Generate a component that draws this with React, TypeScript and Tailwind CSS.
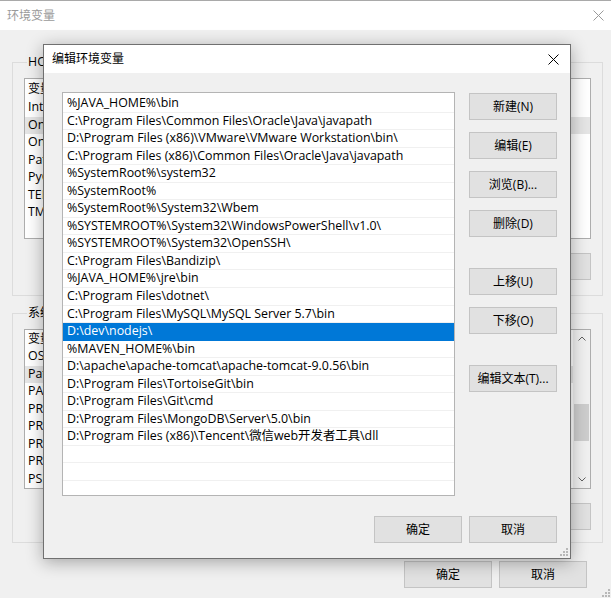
import React from "react";

const paths = [
  "%JAVA_HOME%\\bin",
  "C:\\Program Files\\Common Files\\Oracle\\Java\\javapath",
  "D:\\Program Files (x86)\\VMware\\VMware Workstation\\bin\\",
  "C:\\Program Files (x86)\\Common Files\\Oracle\\Java\\javapath",
  "%SystemRoot%\\system32",
  "%SystemRoot%",
  "%SystemRoot%\\System32\\Wbem",
  "%SYSTEMROOT%\\System32\\WindowsPowerShell\\v1.0\\",
  "%SYSTEMROOT%\\System32\\OpenSSH\\",
  "C:\\Program Files\\Bandizip\\",
  "%JAVA_HOME%\\jre\\bin",
  "C:\\Program Files\\dotnet\\",
  "C:\\Program Files\\MySQL\\MySQL Server 5.7\\bin",
  "D:\\dev\\nodejs\\",
  "%MAVEN_HOME%\\bin",
  "D:\\apache\\apache-tomcat\\apache-tomcat-9.0.56\\bin",
  "D:\\Program Files\\TortoiseGit\\bin",
  "D:\\Program Files\\Git\\cmd",
  "D:\\Program Files\\MongoDB\\Server\\5.0\\bin",
  "D:\\Program Files (x86)\\Tencent\\微信web开发者工具\\dll",
  "",
  "",
  "",
];

const userVars = ["IntelliJ IDEA", "OneDrive", "OneDriveConsumer", "Path", "PyCharm", "TEMP", "TMP"];
const sysVars = [
  "OS",
  "Path",
  "PATHEXT",
  "PROCESSOR_ARCHITECTURE",
  "PROCESSOR_IDENTIFIER",
  "PROCESSOR_LEVEL",
  "PROCESSOR_REVISION",
  "PSModulePath",
];

function Btn({ children, className = "" }: { children?: React.ReactNode; className?: string }) {
  return (
    <div
      className={
        "flex items-center justify-center h-[27px] w-[88px] bg-[#e1e1e1] border border-[#c4c4c4] text-[12px] text-black shrink-0 " +
        className
      }
    >
      {children}
    </div>
  );
}

function CloseX({ color }: { color: string }) {
  return (
    <svg width="11" height="11" viewBox="0 0 11 11">
      <path d="M0.5 0.5 L10.5 10.5 M10.5 0.5 L0.5 10.5" stroke={color} strokeWidth="1" fill="none" />
    </svg>
  );
}

function Grip() {
  return (
    <svg width="8" height="8" viewBox="0 0 8 8">
      <rect x="6" y="0" width="2" height="2" fill="#b8b8b8" />
      <rect x="3" y="3" width="2" height="2" fill="#b8b8b8" />
      <rect x="6" y="3" width="2" height="2" fill="#b8b8b8" />
      <rect x="0" y="6" width="2" height="2" fill="#b8b8b8" />
      <rect x="3" y="6" width="2" height="2" fill="#b8b8b8" />
      <rect x="6" y="6" width="2" height="2" fill="#b8b8b8" />
    </svg>
  );
}

function VarList({
  items,
  hl,
  heightClass,
  scroll,
}: {
  items: string[];
  hl: number;
  heightClass: string;
  scroll?: boolean;
}) {
  return (
    <div className={"flex bg-white border border-[#adadad] overflow-hidden " + heightClass}>
      <div className="flex-1 flex flex-col">
        <div className="h-[20px] flex items-center pl-[3px] text-[12px] text-black">
          <span>变量</span>
        </div>
        {items.map((v, i) => (
          <div
            key={i}
            className={
              "h-[17.5px] flex items-center pl-[3px] text-[12.4px] text-black " +
              (i === hl ? "bg-[#e5e5e5]" : "")
            }
          >
            {v}
          </div>
        ))}
      </div>
      {scroll && (
        <div className="w-[17px] bg-[#f0f0f0] flex flex-col items-center">
          <div className="h-[17px] flex items-center justify-center">
            <svg width="8" height="5" viewBox="0 0 8 5">
              <path d="M0.5 4.5 L4 1 L7.5 4.5" stroke="#606060" fill="none" />
            </svg>
          </div>
          <div className="flex-1 w-full flex flex-col">
            <div className="h-[57px]" />
            <div className="h-[37px] mx-[1px] bg-[#cdcdcd]" />
          </div>
          <div className="h-[17px] flex items-center justify-center">
            <svg width="8" height="5" viewBox="0 0 8 5">
              <path d="M0.5 0.5 L4 4 L7.5 0.5" stroke="#606060" fill="none" />
            </svg>
          </div>
        </div>
      )}
    </div>
  );
}

export default function App() {
  return (
    <div className="relative w-[611px] h-[598px] overflow-hidden bg-[#f0f0f0] font-['Segoe_UI','Open_Sans','Noto_Sans_CJK_SC',sans-serif] text-black">
      {/* Background window */}
      <div className="flex flex-col h-full">
        <div className="h-[30px] bg-white border-t border-[#a9a9a9] flex items-center justify-between pl-[7px] pr-[7px]">
          <span className="text-[12px] text-[#9a9a9a]">环境变量</span>
          <CloseX color="#9a9a9a" />
        </div>
        <div className="flex-1 flex flex-col pl-[12px] pr-[8px]">
          <fieldset className="mt-[24px] border border-[#dcdcdc] px-[11px] pb-[15px]">
            <legend className="ml-[3px] px-px text-[12.4px] leading-[16px]">HONOR 的用户变量(U)</legend>
            <div className="mt-[8px]">
              <VarList items={userVars} hl={1} heightClass="h-[161px]" />
            </div>
            <div className="mt-[14px] flex justify-end gap-[8px]">
              <Btn />
              <Btn />
              <Btn />
            </div>
          </fieldset>
          <fieldset className="mt-[9px] border border-[#dcdcdc] px-[11px] pb-[12px]">
            <legend className="ml-[3px] px-px text-[12px] leading-[16px]">系统变量(S)</legend>
            <div className="mt-[8px]">
              <VarList items={sysVars} hl={1} heightClass="h-[160px]" scroll />
            </div>
            <div className="mt-[14px] flex justify-end gap-[8px]">
              <Btn />
              <Btn />
              <Btn />
            </div>
          </fieldset>
          <div className="mt-[18px] flex justify-end gap-[7px] pr-[16px]">
            <Btn>确定</Btn>
            <Btn>取消</Btn>
          </div>
        </div>
      </div>
      <div className="absolute right-[1px] bottom-[1px]">
        <Grip />
      </div>

      {/* Modal dialog */}
      <div className="absolute left-[43px] top-[44px] w-[528px] h-[515px] border border-[#707070] bg-[#f0f0f0] shadow-[0_3px_16px_rgba(0,0,0,0.32)] flex flex-col">
        <div className="h-[28px] bg-white flex items-center justify-between pl-[8px] pr-[11px] shrink-0">
          <span className="text-[12px] text-black">编辑环境变量</span>
          <CloseX color="#000000" />
        </div>
        <div className="flex-1 flex flex-col pl-[18px] pr-[13px] pt-[19px]">
          <div className="flex gap-[14px]">
            <div className="w-[393px] h-[404px] bg-white border border-[#b4b4b4] overflow-hidden pt-[2px] flex flex-col">
              {paths.map((p, i) => (
                <div
                  key={i}
                  className={
                    "h-[17.55px] shrink-0 flex items-center pl-[4px] text-[12.4px] whitespace-nowrap border-b " +
                    (i === 13 ? "bg-[#0078d7] text-white border-[#0078d7]" : "text-black border-[#f0f0f0]")
                  }
                >
                  {p}
                </div>
              ))}
            </div>
            <div className="flex flex-col pt-[1px]">
              <Btn>新建(N)</Btn>
              <Btn className="mt-[12px]">编辑(E)</Btn>
              <Btn className="mt-[12px]">浏览(B)...</Btn>
              <Btn className="mt-[12px]">删除(D)</Btn>
              <Btn className="mt-[31px]">上移(U)</Btn>
              <Btn className="mt-[12px]">下移(O)</Btn>
              <Btn className="mt-[31px]">编辑文本(T)...</Btn>
            </div>
          </div>
          <div className="mt-[20px] flex justify-end gap-[7px]">
            <Btn className="border-[#0078d7]">确定</Btn>
            <Btn>取消</Btn>
          </div>
        </div>
        <div className="absolute right-[2px] bottom-[2px]">
          <Grip />
        </div>
      </div>
    </div>
  );
}
